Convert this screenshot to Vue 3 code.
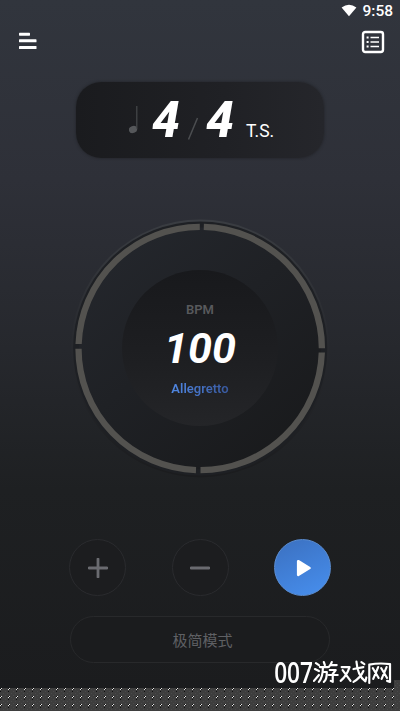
<script setup>
import { ref } from 'vue'

const beats = ref(4)
const unit = ref(4)
const bpm = ref(100)
const playing = ref(false)
const change = (n) => { bpm.value = Math.min(240, Math.max(20, bpm.value + n)) }
</script>

<template>
  <div class="screen">
    <header class="status">
      <svg class="wifi" viewBox="0 0 16 13"><path d="M.6 3.6Q8-2 15.4 3.6L8 12.3Z" fill="#fff" /></svg>
      <span>9:58</span>
    </header>
    <nav class="toolbar">
      <svg class="menu" viewBox="0 0 18 18">
        <g fill="#fff">
          <rect x="0" y="0.7" width="11" height="3" rx=".6" />
          <rect x="0" y="7.3" width="17.5" height="3" rx=".6" />
          <rect x="0" y="14" width="17.5" height="3" rx=".6" />
        </g>
      </svg>
      <svg class="list" viewBox="0 0 24 24" fill="none" stroke="#fff">
        <rect x="2" y="2" width="20" height="20" rx="2.2" stroke-width="2.4" />
        <path d="M9.5 7.5h8.5M9.5 12h8.5M9.5 16.5h8.5" stroke-width="1.6" />
        <path d="M5.6 7.5h2M5.6 12h2M5.6 16.5h2" stroke-width="1.8" />
      </svg>
    </nav>

    <section class="signature">
      <svg class="note" viewBox="0 0 12 30">
        <ellipse cx="4" cy="24.5" rx="4.2" ry="3.5" fill="#55575a" transform="rotate(-20 4 24.5)" />
        <path d="M7.8 1v23" stroke="#47494c" stroke-width="1.2" />
      </svg>
      <span class="beat">{{ beats }}</span>
      <svg class="slash" viewBox="0 0 12 24"><path d="M10.5 1L1.5 22.5" stroke="#4c4e51" stroke-width="1.5" /></svg>
      <span class="beat">{{ unit }}</span>
      <span class="ts">T.S.</span>
    </section>

    <section class="dial">
      <svg class="ring" viewBox="0 0 260 260" fill="none">
        <defs>
          <linearGradient id="disc" x1="0" y1="0" x2=".8" y2="1">
            <stop offset="0" stop-color="#25282e" />
            <stop offset="1" stop-color="#191a1c" />
          </linearGradient>
          <linearGradient id="rim" x1="0" y1="0" x2="0" y2="1">
            <stop offset="0" stop-color="#3a3d42" />
            <stop offset=".4" stop-color="#2a2c31" />
            <stop offset="1" stop-color="#1b1c1e" />
          </linearGradient>
        </defs>
        <circle cx="130.2" cy="130.5" r="128" fill="#1e2024" stroke="url(#rim)" stroke-width="1.8" />
        <circle cx="130.2" cy="130.5" r="121" fill="url(#disc)" />
        <g stroke="#53524f" stroke-width="6.3">
          <path d="M133.8 8.9A121.700 121.700 0 0 1 251.9 130.2" />
          <path d="M251.800 134.5A121.700 121.700 0 0 1 130.500 252.2" />
          <path d="M126 252.1A121.700 121.700 0 0 1 8.500 130.8" />
          <path d="M8.600 126A121.700 121.700 0 0 1 129.800 8.8" />
        </g>
      </svg>
      <div class="center">
        <span class="label">BPM</span>
        <strong class="value">{{ bpm }}</strong>
        <span class="tempo">Allegretto</span>
      </div>
    </section>

    <section class="controls">
      <button class="round" @click="change(1)">
        <svg viewBox="0 0 20 20"><path d="M10 1v18M1 10h18" /></svg>
      </button>
      <button class="round" @click="change(-1)">
        <svg viewBox="0 0 20 20"><path d="M1 10h18" /></svg>
      </button>
      <button class="round play" @click="playing = !playing">
        <svg viewBox="0 0 20 20"><path d="M4.2 3.2L15.5 10L4.2 16.8Z" /></svg>
      </button>
    </section>
    <button class="mode">极简模式</button>

    <svg class="pattern" width="400" height="31">
      <defs>
        <pattern id="dots" width="8" height="8" patternUnits="userSpaceOnUse">
          <rect width="8" height="8" fill="#3e3e3e" />
          <path d="M3 1h1v1h-1zM5 3h1v1h-1zM3 5h1v1h-1zM5 7h1v1h-1zM7 5h1v1h-1z" fill="#4a4a4a" />
          <path d="M1 0h1v1h-1zM0 1h1v1h-1z" fill="#e8e8e8" />
          <path d="M0 0h1v1h-1zM1 1h1v1h-1zM0 3h1v1h-1z" fill="#111" />
        </pattern>
      </defs>
      <path d="M0 8H394V0H400V31H0Z" fill="url(#dots)" />
    </svg>

    <div class="watermark">
      <span class="digits">007</span>
      <svg viewBox="0 0 80 26" fill="none" stroke="#fff" stroke-width="2.2" stroke-linecap="round" stroke-linejoin="round">
        <path d="M3 3l3 2M2 9l4 2M1 21l5-6M11 2l1 3M7 7h8M10 8q0 9-4 14M10 12h4q0 8-3 10M19 2q-1 3-3 5M18 5h6M17 10h6l-3 4v8l-2-1M16 15h9" />
        <path d="M29 7h8q-3 9-9 14M30 10l8 11M41 9l10-2M44 1.5q1 14 9 20l1-4M51 11q-3 7-10 11M49 2l3 2" />
        <path d="M57 23V4.5Q67 2.5 78 4V22l-3-1M60.5 8l6 10M66 7l-5 12M69 8l6 10M74.5 7l-5 12" />
      </svg>
    </div>
  </div>
</template>

<style>
body { margin: 0; background: #1b1c1e; }
</style>

<style scoped>
.screen {
  position: relative;
  box-sizing: border-box;
  width: 400px;
  height: 711px;
  overflow: hidden;
  display: flex;
  flex-direction: column;
  align-items: center;
  background: linear-gradient(180deg, #31353d 0, #2e3038 180px, #26282d 350px, #1e2022 490px, #1b1c1e 690px);
  color: #fff;
  font-family: Roboto, "Noto Sans CJK SC", sans-serif;
}
.status {
  box-sizing: border-box;
  width: 100%;
  height: 22px;
  padding-right: 7px;
  display: flex;
  justify-content: flex-end;
  align-items: center;
  gap: 5px;
  font-size: 15.5px;
  font-weight: 500;
  line-height: 22px;
}
.wifi { width: 16px; height: 13px; margin-bottom: 2px; }
.toolbar {
  box-sizing: border-box;
  width: 100%;
  height: 60px;
  padding: 8px 15px 0 19px;
  display: flex;
  justify-content: space-between;
}
.menu { width: 18px; height: 18px; margin-top: 2px; }
.list { width: 24px; height: 24px; }
.signature {
  box-sizing: border-box;
  width: 248px;
  height: 76px;
  flex: none;
  padding-left: 53px;
  display: flex;
  align-items: flex-start;
  border-radius: 25px;
  background: linear-gradient(90deg, #1a1b1e, #202125 60%, #25262b);
  box-shadow: 0 0 3px #1f2125;
}
.note { width: 12px; height: 30px; margin: 23px 11px 0 0; flex: none; }
.beat { width: 28px; margin-top: 9px; font-size: 50px; line-height: 58px; font-style: italic; font-weight: 800; }
.slash { width: 12px; height: 24px; margin: 35px 7px 0 7px; flex: none; }
.ts { margin: 39px 0 0 12px; font-size: 17.5px; line-height: 20px; }
.dial {
  width: 260px;
  height: 260px;
  margin-top: 60px;
  flex: none;
  display: grid;
  place-items: center;
}
.ring, .center { grid-area: 1 / 1; }
.ring { width: 260px; height: 260px; }
.center {
  z-index: 1;
  width: 156px;
  height: 156px;
  display: flex;
  flex-direction: column;
  align-items: center;
  border-radius: 50%;
  background: linear-gradient(#18191c, #1e1f22 60%, #242528);
}
.label { margin-top: 31px; font-size: 13px; line-height: 18px; font-weight: 600; color: #58595c; }
.value { margin-top: 3px; font-size: 43px; line-height: 52px; font-style: italic; font-weight: 700; }
.tempo {
  margin-top: 6px;
  font-size: 13px;
  line-height: 18px;
  font-weight: 600;
  background: linear-gradient(90deg, #5088e4, #38589e);
  background-clip: text;
  color: transparent;
}
.controls { width: 262px; margin-top: 61px; display: flex; justify-content: space-between; }
button { box-sizing: border-box; padding: 0; font-family: inherit; }
.round {
  width: 57px;
  height: 57px;
  display: grid;
  place-items: center;
  border: 1px solid #2a2b2e;
  border-radius: 50%;
  background: #1c1d1f;
}
.round svg { width: 20px; height: 20px; fill: none; stroke: #6a6b70; stroke-width: 2.8; stroke-linecap: round; }
.play { border-color: #5a8dd2; background: linear-gradient(155deg, #3b70c0, #478fee); }
.round.play svg { margin-left: 3px; fill: #fff; stroke: #fff; stroke-width: 2.6; stroke-linejoin: round; }
.mode {
  width: 260px;
  height: 47px;
  margin-top: 20px;
  padding: 0 0 1px 5px;
  flex: none;
  border: 1px solid #28292b;
  border-radius: 24px;
  background: #1b1c1e;
  color: #5f6064;
  font-size: 15px;
}
.pattern { margin-top: auto; flex: none; display: block; }
.watermark {
  position: absolute;
  right: 8px;
  bottom: 22px;
  display: flex;
  align-items: center;
  height: 32px;
}
.digits { margin-bottom: 2px; font: 600 28px/32px "Open Sans", sans-serif; transform: scaleX(.81); transform-origin: right; }
.watermark svg { width: 79px; height: 26px; }
</style>
